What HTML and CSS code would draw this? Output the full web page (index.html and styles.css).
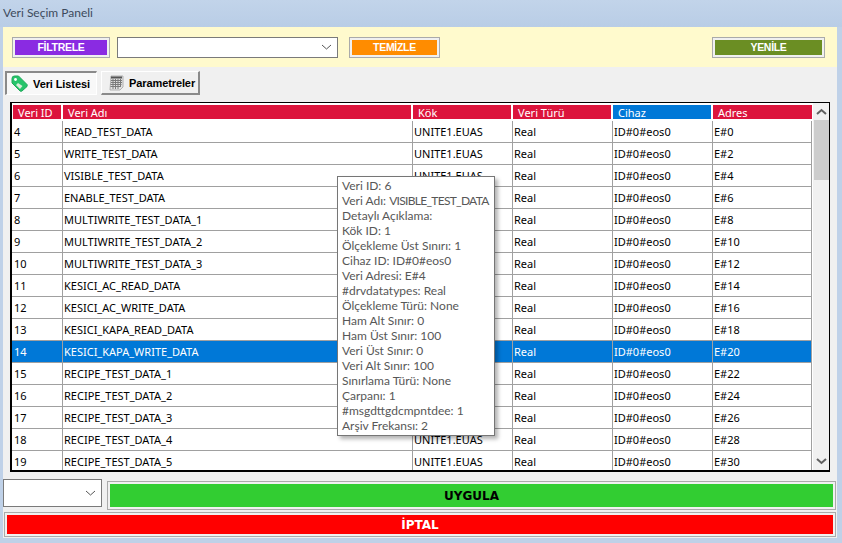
FILE: index.html
```html
<!DOCTYPE html>
<html>
<head>
    <title>Veri Seçim Paneli</title>
    <link rel="stylesheet" href="styles.css">
</head>
<body>
    <div class="title-bar">Veri Seçim Paneli</div>

    <div class="window">
        <!-- Filter bar -->
        <div class="filter-bar">
            <button class="btn btn-filter">FİLTRELE</button>
            <div class="combo combo-filter">
                <svg class="chevron" width="11" height="6" viewBox="0 0 11 6"><path d="M1 1l4.500 4 4.500-4" fill="none" stroke="#555" stroke-width="1"/></svg>
            </div>
            <button class="btn btn-clear">TEMİZLE</button>
            <button class="btn btn-refresh">YENİLE</button>
        </div>

        <!-- Tabs -->
        <div class="tabs">
            <div class="tab tab-active">
                <svg width="17" height="17" viewBox="0 0 17 17"><path d="M1 3.500Q1 1 3.500 1H7.500L16 9.500Q16.500 10.500 16 11.500L11 16Q10 16.500 9 16L1 8z" fill="#27c46b" stroke="#1fa85a" stroke-width="1"/><path d="M7 8l4.500 3-2.500 3-4-4z" fill="#d9ecd8"/><circle cx="4.500" cy="4.500" r="1.400" fill="#fff"/></svg>
                <span>Veri Listesi</span>
            </div>
            <div class="tab">
                <svg width="15" height="16" viewBox="0 0 15 16"><path d="M2 1h12v11l-3 3H1z" fill="#e2e2e2" stroke="#b0b0b0"/><path d="M2 2.500h11" stroke="#555" stroke-width="2"/><path d="M2 5.500h11M2 7.500h11M1.500 9.500h11M1.500 11.500h10M4 4v10M6.500 4v10M9 4v10M11.500 4v8" stroke="#7a7a7a" stroke-width="1" fill="none"/></svg>
                <span>Parametreler</span>
            </div>
        </div>

        <!-- Data grid -->
        <div class="grid-frame">
            <div class="grid-body">
                <div class="row head">
                    <div class="cell">Veri ID</div>
                    <div class="cell">Veri Adı</div>
                    <div class="cell">Kök</div>
                    <div class="cell">Veri Türü</div>
                    <div class="cell sorted">Cihaz</div>
                    <div class="cell">Adres</div>
                </div>
                <div class="row"><div class="cell">4</div><div class="cell">READ_TEST_DATA</div><div class="cell">UNITE1.EUAS</div><div class="cell">Real</div><div class="cell">ID#0#eos0</div><div class="cell">E#0</div></div>
                <div class="row"><div class="cell">5</div><div class="cell">WRITE_TEST_DATA</div><div class="cell">UNITE1.EUAS</div><div class="cell">Real</div><div class="cell">ID#0#eos0</div><div class="cell">E#2</div></div>
                <div class="row"><div class="cell">6</div><div class="cell">VISIBLE_TEST_DATA</div><div class="cell">UNITE1.EUAS</div><div class="cell">Real</div><div class="cell">ID#0#eos0</div><div class="cell">E#4</div></div>
                <div class="row"><div class="cell">7</div><div class="cell">ENABLE_TEST_DATA</div><div class="cell">UNITE1.EUAS</div><div class="cell">Real</div><div class="cell">ID#0#eos0</div><div class="cell">E#6</div></div>
                <div class="row"><div class="cell">8</div><div class="cell">MULTIWRITE_TEST_DATA_1</div><div class="cell">UNITE1.EUAS</div><div class="cell">Real</div><div class="cell">ID#0#eos0</div><div class="cell">E#8</div></div>
                <div class="row"><div class="cell">9</div><div class="cell">MULTIWRITE_TEST_DATA_2</div><div class="cell">UNITE1.EUAS</div><div class="cell">Real</div><div class="cell">ID#0#eos0</div><div class="cell">E#10</div></div>
                <div class="row"><div class="cell">10</div><div class="cell">MULTIWRITE_TEST_DATA_3</div><div class="cell">UNITE1.EUAS</div><div class="cell">Real</div><div class="cell">ID#0#eos0</div><div class="cell">E#12</div></div>
                <div class="row"><div class="cell">11</div><div class="cell">KESICI_AC_READ_DATA</div><div class="cell">UNITE1.EUAS</div><div class="cell">Real</div><div class="cell">ID#0#eos0</div><div class="cell">E#14</div></div>
                <div class="row"><div class="cell">12</div><div class="cell">KESICI_AC_WRITE_DATA</div><div class="cell">UNITE1.EUAS</div><div class="cell">Real</div><div class="cell">ID#0#eos0</div><div class="cell">E#16</div></div>
                <div class="row"><div class="cell">13</div><div class="cell">KESICI_KAPA_READ_DATA</div><div class="cell">UNITE1.EUAS</div><div class="cell">Real</div><div class="cell">ID#0#eos0</div><div class="cell">E#18</div></div>
                <div class="row selected"><div class="cell">14</div><div class="cell">KESICI_KAPA_WRITE_DATA</div><div class="cell">UNITE1.EUAS</div><div class="cell">Real</div><div class="cell">ID#0#eos0</div><div class="cell">E#20</div></div>
                <div class="row"><div class="cell">15</div><div class="cell">RECIPE_TEST_DATA_1</div><div class="cell">UNITE1.EUAS</div><div class="cell">Real</div><div class="cell">ID#0#eos0</div><div class="cell">E#22</div></div>
                <div class="row"><div class="cell">16</div><div class="cell">RECIPE_TEST_DATA_2</div><div class="cell">UNITE1.EUAS</div><div class="cell">Real</div><div class="cell">ID#0#eos0</div><div class="cell">E#24</div></div>
                <div class="row"><div class="cell">17</div><div class="cell">RECIPE_TEST_DATA_3</div><div class="cell">UNITE1.EUAS</div><div class="cell">Real</div><div class="cell">ID#0#eos0</div><div class="cell">E#26</div></div>
                <div class="row"><div class="cell">18</div><div class="cell">RECIPE_TEST_DATA_4</div><div class="cell">UNITE1.EUAS</div><div class="cell">Real</div><div class="cell">ID#0#eos0</div><div class="cell">E#28</div></div>
                <div class="row"><div class="cell">19</div><div class="cell">RECIPE_TEST_DATA_5</div><div class="cell">UNITE1.EUAS</div><div class="cell">Real</div><div class="cell">ID#0#eos0</div><div class="cell">E#30</div></div>
            </div>
            <div class="scrollbar">
                <div class="arrow"><svg width="11" height="7" viewBox="0 0 11 7"><path d="M1 6l4.500-4 4.500 4" fill="none" stroke="#606060" stroke-width="2"/></svg></div>
                <div class="thumb"></div>
                <div class="track"></div>
                <div class="arrow"><svg width="11" height="7" viewBox="0 0 11 7"><path d="M1 1l4.500 4 4.500-4" fill="none" stroke="#606060" stroke-width="2"/></svg></div>
            </div>
        </div>

        <!-- Bottom actions -->
        <div class="apply-row">
            <div class="combo combo-small">
                <svg class="chevron" width="11" height="6" viewBox="0 0 11 6"><path d="M1 1l4.500 4 4.500-4" fill="none" stroke="#555" stroke-width="1"/></svg>
            </div>
            <button class="btn btn-apply">UYGULA</button>
        </div>
        <button class="btn btn-cancel">İPTAL</button>

        <div class="tooltip">
            <div>Veri ID: 6</div>
            <div>Veri Adı: <span class="caps">VISIBLE_TEST_DATA</span></div>
            <div>Detaylı Açıklama:</div>
            <div>Kök ID: 1</div>
            <div>Ölçekleme Üst Sınırı: 1</div>
            <div>Cihaz ID: ID#0#eos0</div>
            <div>Veri Adresi: E#4</div>
            <div>#drvdatatypes: Real</div>
            <div>Ölçekleme Türü: None</div>
            <div>Ham Alt Sınır: 0</div>
            <div>Ham Üst Sınır: 100</div>
            <div>Veri Üst Sınır: 0</div>
            <div>Veri Alt Sınır: 100</div>
            <div>Sınırlama Türü: None</div>
            <div>Çarpanı: 1</div>
            <div>#msgdttgdcmpntdee: 1</div>
            <div>Arşiv Frekansı: 2</div>
        </div>
    </div>
</body>
</html>
```

FILE: styles.css
```css
body {
    margin: 0;
    width: 842px;
    height: 543px;
    overflow: hidden;
    background: #bfd1e8;
    font-family: "Noto Sans", "Open Sans", sans-serif;
    font-size: 11px;
    color: #000;
}

.title-bar {
    height: 27px;
    line-height: 26px;
    padding-left: 3px;
    font-family: Lato, sans-serif;
    font-size: 12px;
    color: #3c4a5c;
    background: linear-gradient(180deg, #c2d4ea, #b9cde6);
}

.window {
    position: relative;
    margin: 0 5px 0 3px;
    height: 511px;
    background: #f0f0f0;
}

/* filter bar */
.filter-bar {
    display: flex;
    align-items: center;
    height: 40px;
    padding-left: 9px;
    background: #fffacd;
}

.btn {
    display: block;
    margin: 0;
    padding: 0;
    border: 3px solid #f0f0f0;
    outline: 1px solid #aaa;
    outline-offset: -1px;
    color: #fff;
    font-family: "Liberation Sans", sans-serif;
    font-weight: bold;
    font-size: 10.500px;
    letter-spacing: -0.3px;
    text-align: center;
}

.btn-filter { width: 98px; height: 21px; background: #8a2be2; }
.btn-clear { width: 91px; height: 21px; margin-left: 11px; background: #ff8c00; }
.btn-refresh { width: 113px; height: 21px; margin-left: 272px; background: #6b8e23; }

.combo {
    display: flex;
    align-items: center;
    justify-content: flex-end;
    box-sizing: border-box;
    background: #fff;
    border: 1px solid #7a7a7a;
}

.chevron { margin-right: 5px; }
.combo-filter { width: 221px; height: 21px; margin-left: 7px; }

/* tabs */
.tabs {
    display: flex;
    align-items: flex-start;
    gap: 4px;
    height: 35px;
    padding: 4px 0 0 2px;
    box-sizing: border-box;
}

.tab {
    display: flex;
    align-items: center;
    gap: 5px;
    box-sizing: border-box;
    height: 24px;
    width: 99px;
    padding-left: 7px;
    background: #f0f0f0;
    border: 1px solid #fff;
    border-right: 2px solid #8a8a8a;
    border-bottom: 2px solid #8a8a8a;
    font-family: "Liberation Sans", sans-serif;
    font-weight: bold;
    font-size: 11px;
    letter-spacing: -0.1px;
    white-space: nowrap;
}

.tab svg { flex: none; }

.tab-active {
    width: 92px;
    gap: 5px;
    padding-left: 4px;
    background: #f8f8f8;
    border: 1px solid #fff;
    border-top: 2px solid #8a8a8a;
    border-left: 2px solid #8a8a8a;
}

/* grid */
.grid-frame {
    display: flex;
    box-sizing: border-box;
    width: 820px;
    height: 370px;
    margin-left: 7px;
    background: #fff;
    border: 1px solid #000;
    border-left-width: 2px;
    border-bottom-width: 2px;
    overflow: hidden;
}

.grid-body {
    width: 800px;
    flex: none;
}

.row {
    display: grid;
    grid-template-columns: 51px 350px 100px 100px 100px 99px;
    height: 22px;
    box-sizing: border-box;
    border-bottom: 1px solid #a0a0a0;
    line-height: 21px;
    white-space: nowrap;
}

.cell {
    padding-left: 1px;
    border-right: 1px solid #a0a0a0;
    overflow: hidden;
}

.cell:first-child { padding-left: 2px; }

.row.head {
    height: 18px;
    padding: 2px 0 0 1px;
    grid-template-columns: 50px 350px 100px 100px 100px 99px;
    border-bottom: 2px solid #fff;
    line-height: 15px;
    color: #fff;
    background: #fff;
}

.row.head .cell {
    padding-left: 5px;
    background: #dc143c;
    border-right: 2px solid #fff;
}

.row.head .cell:last-child { border-right: 0; }
.row.head .sorted { background: #0078d7; }

.row.selected {
    color: #fff;
    background: #0078d7;
}

/* scrollbar */
.scrollbar {
    display: flex;
    flex-direction: column;
    flex: 1;
    margin-left: 1px;
    background: #f0f0f0;
}

.arrow {
    display: flex;
    align-items: center;
    justify-content: center;
    height: 17px;
    flex: none;
}

.thumb { height: 60px; flex: none; margin-left: 1px; background: #cdcdcd; }
.track { flex: 1; }

/* bottom buttons */
.apply-row {
    display: flex;
    align-items: flex-start;
    gap: 5px;
    margin-top: 7px;
    height: 33px;
}

.combo-small { width: 99px; height: 28px; }

.btn-apply {
    width: 729px;
    height: 29px;
    margin-top: 2px;
    color: #000;
    background: #32cd32;
    font-family: "DejaVu Sans", sans-serif;
    font-size: 12px;
    letter-spacing: 0;
}

.btn-cancel {
    width: 832px;
    height: 25px;
    margin-left: 1px;
    background: #f00;
    font-family: "DejaVu Sans", sans-serif;
    font-size: 12px;
    letter-spacing: 0;
}

/* tooltip */
.tooltip {
    position: absolute;
    left: 334px;
    top: 149px;
    width: 158px;
    height: 260px;
    box-sizing: border-box;
    padding: 1px 0 0 4px;
    background: #fff;
    border: 1px solid #767676;
    box-shadow: 3px 3px 4px rgba(0, 0, 0, 0.3);
    color: #575757;
    font-family: Lato, sans-serif;
    font-size: 12px;
    line-height: 15px;
    white-space: nowrap;
}

.caps { letter-spacing: -0.7px; }
```
